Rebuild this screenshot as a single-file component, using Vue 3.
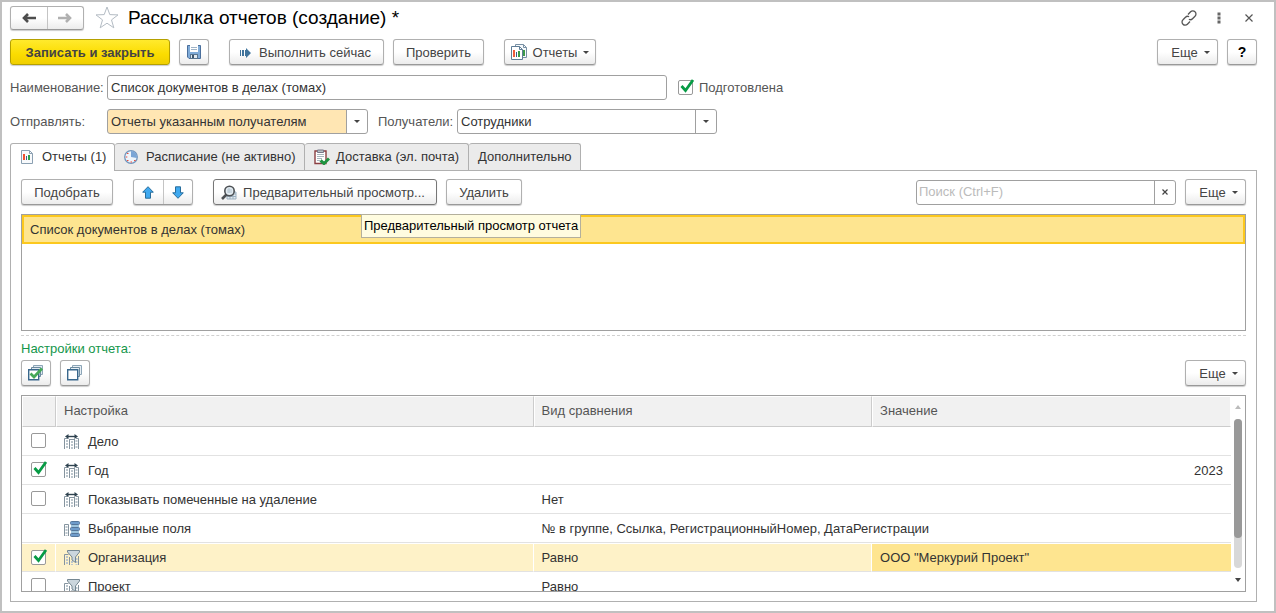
<script setup>
import { ref } from 'vue'

const name = ref('Список документов в делах (томах)')
const prepared = ref(true)
const search = ref('')
const activeTab = ref('reports')

const tabs = [
  { id: 'reports', title: 'Отчеты (1)' },
  { id: 'schedule', title: 'Расписание (не активно)' },
  { id: 'delivery', title: 'Доставка (эл. почта)' },
  { id: 'extra', title: 'Дополнительно' },
]

const rows = ref([
  { id: 1, check: false, icon: 'param', title: 'Дело', comparison: '', value: '' },
  { id: 2, check: true, icon: 'param', title: 'Год', comparison: '', value: '2023', number: true },
  { id: 3, check: false, icon: 'param', title: 'Показывать помеченные на удаление', comparison: 'Нет', value: '' },
  { id: 4, check: null, icon: 'fields', title: 'Выбранные поля', comparison: '№ в группе, Ссылка, РегистрационныйНомер, ДатаРегистрации', value: '' },
  { id: 5, check: true, icon: 'filter', title: 'Организация', comparison: 'Равно', value: 'ООО "Меркурий Проект"', selected: true },
  { id: 6, check: false, icon: 'filter', title: 'Проект', comparison: 'Равно', value: '' },
])
</script>

<template>
  <div class="window">
    <header class="titlebar">
      <div class="group nav">
        <button type="button" aria-label="Назад">
          <svg width="14" height="12" viewBox="0 0 14 12"><path d="M6 2 2 6l4 4M2 6h12" fill="none" stroke="#4d4d4d" stroke-width="2.6" /></svg>
        </button>
        <button type="button" aria-label="Вперед">
          <svg width="14" height="12" viewBox="0 0 14 12"><path d="m8 2 4 4-4 4M12 6H0" fill="none" stroke="#b0b0b0" stroke-width="2.6" /></svg>
        </button>
      </div>
      <button type="button" class="plain star" aria-label="Избранное">
        <svg width="24" height="23" viewBox="0 0 24 23"><path d="m12 1 2.8 7.6 8.2.3-6.5 5 2.3 7.9-6.8-4.6-6.8 4.6 2.3-7.9-6.5-5 8.2-.3z" fill="#fff" stroke="#b4bcc4" /></svg>
      </button>
      <h1>Рассылка отчетов (создание) *</h1>
      <div class="window-tools">
        <button type="button" class="plain" aria-label="Ссылка">
          <svg width="16" height="16" viewBox="0 0 16 16"><g fill="none" stroke="#555" stroke-width="1.3"><path d="m7 4.5 2.6-2.7a3 3 0 0 1 4.4 0 3 3 0 0 1 0 4.4L11.5 8.8a3 3 0 0 1-3.6.5" /><path d="m9 11.5-2.6 2.7a3 3 0 0 1-4.4 0 3 3 0 0 1 0-4.4L4.5 7.2a3 3 0 0 1 3.6-.5" /></g></svg>
        </button>
        <button type="button" class="plain" aria-label="Меню">
          <svg width="4" height="12" viewBox="0 0 4 12"><path d="M.5.5h3v3h-3zM.5 4.500h3v3h-3zM.5 8.500h3v3h-3z" fill="#666" /></svg>
        </button>
        <button type="button" class="plain close" aria-label="Закрыть">
          <svg width="8" height="8" viewBox="0 0 8 8"><path d="m.5.5 7 7m0-7-7 7" stroke="#555" stroke-width="1.2" /></svg>
        </button>
      </div>
    </header>

    <div class="bar commands">
      <button type="button" class="btn primary">Записать и закрыть</button>
      <button type="button" class="btn square save" aria-label="Записать">
        <svg width="14" height="14" viewBox="0 0 14 14"><path d="M.5.5h13v13H2L.5 12z" fill="#7fabd8" stroke="#4a6f9c" /><path d="M3 0h8v7H3z" fill="#fff" /><path d="M4 2.500h6M4 4.500h6" stroke="#9fb4c8" /><path d="M3 9h8v5H3z" fill="#5a7690" /><path d="M4 10h6v3H4z" fill="#e2eaf0" /><path d="M5 10h2v3H5z" fill="#3d566e" /></svg>
      </button>
      <button type="button" class="btn run">
        <svg width="11" height="10" viewBox="0 0 11 10"><path d="M0 2h1v6H0zM2 2h2v6H2zM5 2h1V0l5 5-5 5V8H5z" fill="#40749c" /></svg>
        <span>Выполнить сейчас</span>
      </button>
      <button type="button" class="btn verify">Проверить</button>
      <button type="button" class="btn reports-menu">
        <svg width="16" height="17" viewBox="0 0 16 17"><path d="M4.5.5h8l3 3v10h-11z" fill="#f7fafc" stroke="#7890a4" /><path d="M12.5.5v3h3" fill="none" stroke="#7890a4" /><path d="M12 6h2v6h-2z" fill="#3c9a48" /><path d="M.5 2.500h8l3 3v10H.5z" fill="#fff" stroke="#5f7d96" /><path d="M8.5 2.500v3h3" fill="none" stroke="#5f7d96" /><path d="M2 6h2v7H2z" fill="#ef5b3b" /><path d="M5 8h1v5H5z" fill="#375c86" /><path d="M7 7h2v6H7z" fill="#3c9a48" /></svg>
        <span>Отчеты</span><i class="caret"></i>
      </button>
      <span class="spacer"></span>
      <button type="button" class="btn more">Еще<i class="caret"></i></button>
      <button type="button" class="btn square help">?</button>
    </div>

    <div class="bar field-row">
      <label for="name" class="caption">Наименование:</label>
      <input id="name" v-model="name" type="text" class="text name" />
      <label class="tick prepared">
        <span class="tickbox"><input v-model="prepared" type="checkbox" /><svg v-if="prepared" width="16" height="16" viewBox="0 0 16 16"><path d="m2.500 6 4 4.500L14 0" fill="none" stroke="#079b45" stroke-width="2.8" /></svg></span>
        Подготовлена
      </label>
    </div>

    <div class="bar field-row second">
      <label for="send" class="caption">Отправлять:</label>
      <span class="drop highlighted">
        <select id="send"><option>Отчеты указанным получателям</option></select>
        <i class="caret"></i>
      </span>
      <label for="recipients" class="caption recipients">Получатели:</label>
      <span class="drop">
        <select id="recipients"><option>Сотрудники</option></select>
        <i class="caret"></i>
      </span>
    </div>

    <nav class="tabs" role="tablist">
      <button v-for="tab in tabs" :key="tab.id" type="button" role="tab" class="tab" :class="[tab.id, { active: tab.id === activeTab }]" :aria-selected="tab.id === activeTab" @click="activeTab = tab.id">
        <svg v-if="tab.id === 'reports'" width="13" height="14" viewBox="0 0 13 14"><path d="M.5.5h8l3 3v10H.5z" fill="#f8fafc" stroke="#8ba0b2" /><path d="M8.5.5v3h3" fill="none" stroke="#8ba0b2" /><path d="M2 4h2v6H2z" fill="#f05030" /><path d="M5 6h1v4H5z" fill="#405f88" /><path d="M7 5h2v5H7z" fill="#2ca048" /></svg>
        <svg v-else-if="tab.id === 'schedule'" width="14" height="14" viewBox="0 0 14 14"><circle cx="7" cy="7" r="6.3" fill="#eef4fa" stroke="#7295bc" stroke-width="1.3" /><path d="M7 7V1a6 6 0 0 1 5.8 7z" fill="#7aa5d6" /><path d="M3 3.500h1.500M1.800 7h1.500M3 10.500h1.500M6.500 12h1.500M10 10.500h1.500" stroke="#ee4b3a" stroke-width="1.2" /></svg>
        <svg v-else-if="tab.id === 'delivery'" width="16" height="16" viewBox="0 0 16 16"><path d="M1 2h11v12.500H1z" fill="#fff" stroke="#8b3f42" stroke-width="1.4" /><path d="M3.500 1h6v2.500h-6z" fill="#b8c0c4" stroke="#778" /><path d="M3 5.500h7M3 7.500h7M3 9.500h5M3 11.500h3" stroke="#a7b5bd" /><path d="m6.500 11.500 3.500 3 5-5" fill="none" stroke="#1e9340" stroke-width="3" /></svg>
        <span>{{ tab.title }}</span>
      </button>
    </nav>

    <main class="panel">
      <div class="bar">
        <button type="button" class="btn pick">Подобрать</button>
        <div class="group move">
          <button type="button" aria-label="Переместить вверх"><svg width="12" height="13" viewBox="0 0 12 13"><path d="m6 .7 5.300 5.500H8.500v6h-5v-6H.7z" fill="#3fa9f0" stroke="#286d9c" /></svg></button>
          <button type="button" aria-label="Переместить вниз"><svg width="12" height="13" viewBox="0 0 12 13"><path d="M6 12.300.7 6.800h2.800v-6h5v6h2.800z" fill="#3fa9f0" stroke="#286d9c" /></svg></button>
        </div>
        <div class="preview-wrap">
          <button type="button" class="btn preview" aria-describedby="preview-tip">
            <svg width="16" height="16" viewBox="0 0 16 16"><path d="M6 7h9v7H6z" fill="#e3eaf0" stroke="#9bb0c0" /><path d="M6 9h9M6 11.500h9M9 7v7M12 7v7" stroke="#9bb0c0" /><circle cx="8.500" cy="6" r="4.700" fill="#e3ecf2" stroke="#4c5054" stroke-width="1.6" /><path d="M5.500 9.500 1 14" stroke="#4c5054" stroke-width="2.6" /><path d="M6 5h5M6 7h5M8 3v5" stroke="#b4c4d0" /></svg>
            <span>Предварительный просмотр...</span>
          </button>
          <div id="preview-tip" class="tooltip" role="tooltip">Предварительный просмотр отчета</div>
        </div>
        <button type="button" class="btn remove">Удалить</button>
        <span class="spacer"></span>
        <div class="search">
          <input v-model="search" type="text" placeholder="Поиск (Ctrl+F)" aria-label="Поиск" />
          <button type="button" aria-label="Очистить" @click="search = ''"><svg width="6" height="6" viewBox="0 0 6 6"><path d="m.5.5 5 5m0-5-5 5" stroke="#444" stroke-width="1.2" /></svg></button>
        </div>
        <button type="button" class="btn more">Еще<i class="caret"></i></button>
      </div>

      <ul class="report-list">
        <li>Список документов в делах (томах)</li>
      </ul>
      <hr />
      <h2>Настройки отчета:</h2>
      <div class="bar marks">
        <button type="button" class="btn square" aria-label="Установить флажки">
          <svg width="16" height="16" viewBox="0 0 16 16"><path d="M5.500.5h9v9h-9z" fill="#dfe9f0" stroke="#8ba4b6" /><path d="M3.500 2.500h9v9h-9z" fill="#dfe9f0" stroke="#6d8ba0" /><path d="M.7 4.700h10v10h-10z" fill="#fff" stroke="#39678c" stroke-width="1.4" /><path d="m2.500 8.500 3.500 3.500 8-8.500" fill="none" stroke="#45a858" stroke-width="2.8" /></svg>
        </button>
        <button type="button" class="btn square" aria-label="Снять флажки">
          <svg width="16" height="16" viewBox="0 0 16 16"><path d="M5.500.5h9v9h-9z" fill="#e6eef4" stroke="#8ba4b6" /><path d="M3.500 2.500h9v9h-9z" fill="#e6eef4" stroke="#6d8ba0" /><path d="M.7 4.700h10v10h-10z" fill="#fff" stroke="#39678c" stroke-width="1.4" /></svg>
        </button>
        <span class="spacer"></span>
        <button type="button" class="btn more">Еще<i class="caret"></i></button>
      </div>

      <div class="grid">
        <div class="grid-body">
          <table>
            <colgroup><col class="c-check" /><col class="c-name" /><col class="c-cmp" /><col /></colgroup>
            <thead>
              <tr><th></th><th>Настройка</th><th>Вид сравнения</th><th>Значение</th></tr>
            </thead>
            <tbody>
              <tr v-for="row in rows" :key="row.id" :class="{ selected: row.selected }">
                <td class="check">
                  <label v-if="row.check !== null" class="tickbox"><input v-model="row.check" type="checkbox" :aria-label="row.title" /><svg v-if="row.check" width="16" height="16" viewBox="0 0 16 16"><path d="m2.500 6 4 4.500L14 0" fill="none" stroke="#079b45" stroke-width="2.8" /></svg></label>
                </td>
                <td>
                  <div class="setting">
                    <svg v-if="row.icon === 'param'" width="16" height="16" viewBox="0 0 16 16"><path d="M.5 15V4.500H4M5.500 15V5.500M10.500 15V5.500M12 4.500h2.500V15M5 5.500h6" fill="none" stroke="#85949f" /><path d="M3 6v9M8 7v8M12.500 6v9" stroke="#bcc6cd" stroke-width="2" stroke-dasharray="2 1" /><path d="M3 2.500h9" stroke="#2f4350" stroke-width="1.4" /><path d="M4.500 0v5L1 2.500zM10.500 0v5L14 2.500z" fill="#2f4350" /></svg>
                    <svg v-else-if="row.icon === 'fields'" width="16" height="16" viewBox="0 0 16 16"><path d="M.5 15V3.500h4V15" fill="#fff" stroke="#85949f" /><path d="M2.500 5v10" stroke="#bcc6cd" stroke-width="2" stroke-dasharray="2 1" /><g fill="#6f9ccb" stroke="#56779b"><rect x="6.500" y=".5" width="9" height="3" rx="1" /><rect x="6.500" y="6.500" width="9" height="3" rx="1" /><rect x="6.500" y="12.500" width="9" height="3" rx="1" /></g><path d="M7 5h8M7 11h8" stroke="#9dc4dd" stroke-width="2" /></svg>
                    <svg v-else width="16" height="16" viewBox="0 0 16 16"><path d="M.5 15V4.500h4M5.500 15V7M14.500 15V6" fill="none" stroke="#85949f" /><path d="M3 6v9M8 11v4M12.500 8v7" stroke="#bcc6cd" stroke-width="2" stroke-dasharray="2 1" /><path d="M3.500.5h12v1.500L11.500 7v5.500L8 10V7L3.500 2z" fill="#cbd6dd" stroke="#758792" /></svg>
                    {{ row.title }}
                  </div>
                </td>
                <td>{{ row.comparison }}</td>
                <td :class="{ number: row.number, current: row.selected }">{{ row.value }}</td>
              </tr>
            </tbody>
          </table>
        </div>
        <div class="scroll" aria-hidden="true">
          <i class="arrow up"></i>
          <div class="track"><div class="thumb"></div></div>
          <i class="arrow down"></i>
        </div>
      </div>
    </main>
  </div>
</template>

<style>
body {
  margin: 0;
}
</style>

<style scoped>
* {
  box-sizing: border-box;
}
.window {
  display: flex;
  flex-direction: column;
  height: 100vh;
  min-height: 520px;
  padding: 3px 17px 9px 8px;
  border: 2px solid #c0c0c0;
  background: #fff;
  color: #333;
  font: 13px/16px "Liberation Sans", Arial, sans-serif;
}
button, input, select {
  font: inherit;
  color: inherit;
}
button {
  padding: 0;
}
svg {
  display: block;
  flex: none;
}
h1, h2, ul {
  margin: 0;
  padding: 0;
  font-weight: normal;
}
.titlebar, .bar {
  display: flex;
  align-items: center;
  flex: none;
}
.titlebar {
  height: 25px;
}
.group {
  display: flex;
  border: 1px solid #b0b0b0;
  border-bottom-color: #999;
  border-radius: 3px;
  background: linear-gradient(#fff 50%, #ececec);
  box-shadow: 0 1px 1px #ccc;
}
.group button {
  display: flex;
  flex: 1;
  align-items: center;
  justify-content: center;
  border: 0;
  background: none;
}
.group button + button {
  border-left: 1px solid #c4c4c4;
}
.nav {
  width: 74px;
  height: 24px;
}
.plain {
  border: 0;
  background: none;
}
.star {
  margin-left: 11px;
}
h1 {
  margin-left: 9px;
  color: #000;
  font-size: 19px;
  line-height: 24px;
}
.window-tools {
  display: flex;
  align-items: center;
  gap: 20px;
  margin-left: auto;
  margin-right: 4px;
}
.close {
  margin-left: 4px;
}
.commands {
  margin-top: 9px;
}
.btn {
  display: flex;
  align-items: center;
  justify-content: center;
  height: 26px;
  padding-top: 1px;
  border: 1px solid #b0b0b0;
  border-bottom-color: #999;
  border-radius: 3px;
  background: linear-gradient(#fff 50%, #ececec);
  box-shadow: 0 1px 1px #ccc;
  color: #444;
  white-space: nowrap;
}
.primary {
  width: 160px;
  border-color: #b5a000;
  background: linear-gradient(#ffea2d, #fbdc00 60%, #f0cf00);
  font-weight: bold;
}
.square {
  width: 30px;
  padding-top: 0;
}
.save, .help {
  margin-left: 9px;
}
.help {
  color: #000;
  font-weight: bold;
  font-size: 14px;
}
.run {
  gap: 8px;
  width: 155px;
  padding-right: 2px;
  margin-left: 20px;
}
.verify {
  width: 91px;
  margin-left: 9px;
}
.reports-menu {
  gap: 6px;
  width: 92px;
  margin-left: 20px;
}
.more {
  gap: 6px;
  width: 61px;
  padding-left: 6px;
}
.caret {
  width: 0;
  border: 3px solid transparent;
  border-top-color: #444;
  border-bottom: 0;
}
.spacer {
  flex: 1;
}
.field-row {
  height: 25px;
  margin-top: 10px;
  color: #555;
}
.second {
  margin-top: 9px;
}
.caption {
  flex: none;
  width: 97px;
}
.text, .drop, .search {
  height: 25px;
  border: 1px solid #a0a0a0;
  border-radius: 3px;
  background: #fff;
  color: #333;
}
.text {
  padding: 0 3px;
}
.name {
  flex: 0 1 560px;
  min-width: 0;
}
.tick {
  display: flex;
  align-items: center;
}
.prepared {
  gap: 5px;
  margin-left: 11px;
}
.tickbox {
  display: block;
  position: relative;
  width: 16px;
  height: 16px;
}
.tickbox input {
  display: block;
  appearance: none;
  width: 15px;
  height: 15px;
  margin: 0;
  border: 1px solid #999;
  border-radius: 2px;
  background: #fff;
}
.tickbox svg {
  position: absolute;
  top: 0;
  left: 1px;
  overflow: visible;
  pointer-events: none;
}
.drop {
  display: grid;
  grid-template-columns: 1fr 21px;
  align-items: center;
  justify-items: center;
  width: 260px;
  overflow: hidden;
}
.drop select {
  grid-area: 1 / 1 / 2 / 3;
  appearance: none;
  width: 100%;
  height: 23px;
  padding: 0 24px 0 3px;
  border: 0;
  background: linear-gradient(#a0a0a0, #a0a0a0) right 20px top / 1px 100% no-repeat;
}
.drop .caret {
  grid-area: 1 / 2;
  z-index: 1;
  pointer-events: none;
}
.highlighted {
  width: 261px;
  background: linear-gradient(to left, #fff 20px, #ffe6b3 20px);
}
.recipients {
  width: 79px;
  margin-left: 10px;
}
.tabs {
  display: flex;
  position: relative;
  flex: none;
  margin-top: 9px;
}
.tab {
  display: flex;
  align-items: center;
  height: 27px;
  padding: 0 9px;
  border: 1px solid #b0b0b0;
  border-bottom: 0;
  border-left-width: 0;
  border-radius: 3px 3px 0 0;
  background: #ebebeb;
  color: #333;
  white-space: nowrap;
}
.tab svg {
  margin-right: 8px;
}
.tab.active {
  height: 28px;
  margin-bottom: -1px;
  padding-bottom: 2px;
  border-left-width: 1px;
  background: #fff;
}
.tab.reports {
  width: 105px;
  padding-left: 10px;
}
.tab.schedule {
  width: 190px;
}
.tab.delivery {
  width: 164px;
}
.tab.delivery svg {
  margin-right: 6px;
}
.tab.extra {
  width: 112px;
}
.panel {
  display: flex;
  flex: 1;
  flex-direction: column;
  min-height: 0;
  padding: 8px 10px 9px;
  border: 1px solid #b0b0b0;
}
.pick {
  width: 92px;
}
.move {
  width: 60px;
  height: 26px;
  margin-left: 20px;
}
.preview-wrap {
  position: relative;
  margin-left: 20px;
}
.preview {
  gap: 6px;
  width: 224px;
  padding-right: 4px;
  border-color: #777;
}
.tooltip {
  position: absolute;
  top: 35px;
  left: 148px;
  z-index: 2;
  padding: 3px 2px;
  border: 1px solid #b4b09c;
  background: #fffce0;
  color: #000;
  white-space: nowrap;
}
.remove {
  width: 76px;
  margin-left: 9px;
}
.search {
  display: flex;
  width: 260px;
  margin-right: 9px;
}
.search input {
  flex: 1;
  min-width: 0;
  padding: 0 2px;
  border: 0;
  background: none;
}
.search input::placeholder {
  color: #bbb;
}
.search button {
  display: flex;
  align-items: center;
  justify-content: center;
  width: 21px;
  border: 0;
  border-left: 1px solid #a0a0a0;
  background: none;
}
.report-list {
  flex: none;
  min-height: 117px;
  margin-top: 9px;
  border: 1px solid #a0a0a0;
  list-style: none;
}
.report-list li {
  height: 29px;
  padding: 4px 6px;
  border: 2px solid #fcc81e;
  background: #fee590;
  line-height: 18px;
}
hr {
  flex: none;
  width: 100%;
  margin: 4px 0 0;
  border: 0;
  border-top: 1px dashed #d0d0d0;
}
h2 {
  margin: 5px 0 3px;
  color: #14964a;
  font-size: 13px;
  line-height: 16px;
}
.marks {
  gap: 9px;
}
.grid {
  display: flex;
  flex: 1;
  min-height: 0;
  margin-top: 9px;
  border: 1px solid #a0a0a0;
}
.grid-body {
  flex: 1;
  min-width: 0;
  overflow: hidden;
}
table {
  width: 100%;
  border-collapse: separate;
  border-spacing: 0;
  table-layout: fixed;
}
.c-check {
  width: 34px;
}
.c-name {
  width: 39.5%;
}
.c-cmp {
  width: 28%;
}
th {
  height: 31px;
  padding: 0 7px 1px;
  border: 1px solid #fff;
  border-right-color: #ccc;
  border-bottom-color: #ccc;
  background: #f1f1f1;
  color: #555;
  font-weight: normal;
  text-align: left;
}
th:last-child {
  border-right-color: #fff;
}
td {
  height: 29px;
  padding: 1px 8px 0;
  border-bottom: 1px solid #e2e2e2;
  white-space: nowrap;
}
.check {
  padding: 0 0 0 9px;
}
.setting {
  display: flex;
  align-items: center;
  gap: 8px;
}
.number {
  text-align: right;
}
.selected td {
  padding-top: 0;
  border-top: 1px solid #fff;
  border-right: 1px solid #fff;
  background: #fef2c8;
}
.selected .current {
  border-right: 0;
  background: #fee590;
}
.scroll {
  display: flex;
  flex-direction: column;
  align-items: center;
  width: 14px;
  padding: 9px 0;
}
.track {
  flex: 1;
  width: 8px;
  margin: 10px 0;
  border-radius: 4px;
  background: #d8d8d8;
}
.thumb {
  height: 80%;
  border-radius: 4px;
  background: #999;
}
.arrow {
  border: 3px solid transparent;
}
.up {
  border-top: 0;
  border-bottom: 4px solid #bbb;
}
.down {
  border-bottom: 0;
  border-top: 4px solid #444;
}
</style>
